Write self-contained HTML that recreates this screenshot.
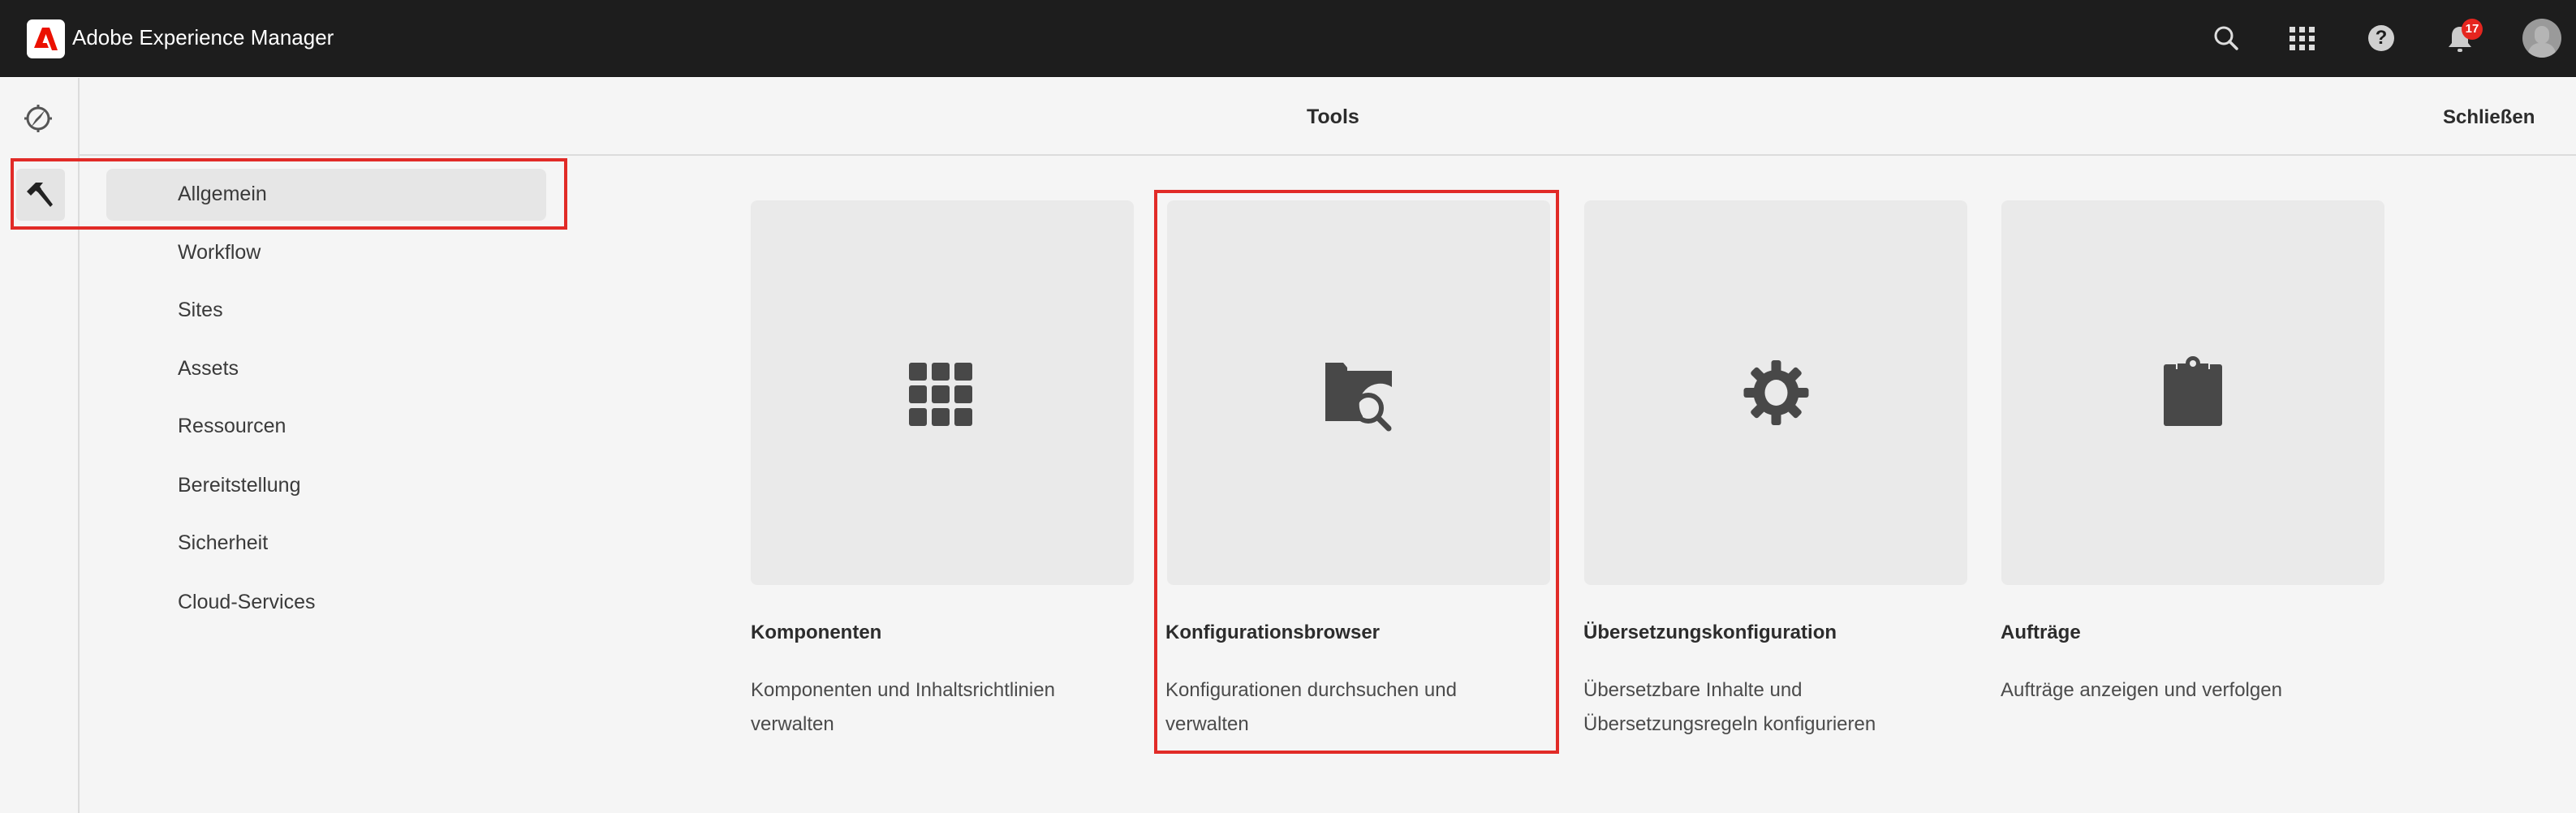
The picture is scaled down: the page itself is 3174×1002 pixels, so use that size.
<!DOCTYPE html>
<html><head><meta charset="utf-8"><style>
*{margin:0;padding:0;box-sizing:border-box}
body{width:3174px;height:1002px;background:#f5f5f5;font-family:"Liberation Sans",sans-serif;position:relative;overflow:hidden;color:#2c2c2c}
.a{position:absolute}
.hdr{left:0;top:0;width:3174px;height:95px;background:#1d1d1d}
.nav{left:219px;font-size:25px;color:#3a3a3a}
.card{top:247px;width:472px;height:474px;background:#eaeaea;border-radius:8px}
.t{font-size:24px;font-weight:bold;color:#2c2c2c;top:766px}
.d{font-size:24px;color:#4b4b4b;line-height:42px;top:830px}
</style></head><body>
<div class="a hdr"></div>
<div class="a" style="left:33px;top:24px;width:47px;height:48px;background:#fff;border-radius:7px"></div>
<svg class="a" style="left:33px;top:24px" width="47" height="48" viewBox="0 0 47 48"><path d="M19 10h9l10 28h-7l-7.5-20-4 11h5l2.5 6H9z" fill="#eb1000"/></svg>
<div class="a" style="left:89px;top:31px;font-size:26px;color:#fff">Adobe Experience Manager</div>
<svg class="a" style="left:2725px;top:29px" width="36" height="36" viewBox="0 0 36 36"><circle cx="15" cy="15" r="10" fill="none" stroke="#ddd" stroke-width="3"/><path d="M22 22l9 9" stroke="#ddd" stroke-width="3.5" stroke-linecap="round"/></svg>
<svg class="a" style="left:2821px;top:33px" width="32" height="30" viewBox="0 0 32 30"><g fill="#ddd"><rect x="0" y="0" width="7" height="7"/><rect x="12" y="0" width="7" height="7"/><rect x="24" y="0" width="7" height="7"/><rect x="0" y="11" width="7" height="7"/><rect x="12" y="11" width="7" height="7"/><rect x="24" y="11" width="7" height="7"/><rect x="0" y="22" width="7" height="7"/><rect x="12" y="22" width="7" height="7"/><rect x="24" y="22" width="7" height="7"/></g></svg>
<div class="a" style="left:2918px;top:31px;width:32px;height:32px;border-radius:50%;background:#d0d0d0;color:#1d1d1d;font-weight:bold;font-size:24px;text-align:center;line-height:32px">?</div>
<svg class="a" style="left:3014px;top:30px" width="34" height="40" viewBox="0 0 34 40"><path d="M17 3c-6 0-10 4-10 11v9l-4 5h28l-4-5v-9c0-7-4-11-10-11z" fill="#ccc"/><rect x="14" y="30" width="6" height="4" rx="2" fill="#ccc"/></svg>
<div class="a" style="left:3033px;top:23px;width:26px;height:26px;border-radius:50%;background:#e5261f;color:#fff;font-size:15px;font-weight:bold;text-align:center;line-height:26px">17</div>
<div class="a" style="left:3108px;top:23px;width:48px;height:48px;border-radius:50%;background:#9a9a9a;overflow:hidden"><div class="a" style="left:15px;top:9px;width:18px;height:22px;border-radius:9px;background:#b5b5b5"></div><div class="a" style="left:7px;top:30px;width:34px;height:30px;border-radius:14px;background:#b5b5b5"></div></div>
<div class="a" style="left:96px;top:95px;width:2px;height:907px;background:#dcdcdc"></div>
<div class="a" style="left:98px;top:190px;width:3076px;height:2px;background:#dcdcdc"></div>
<div class="a" style="left:0;top:95px;width:3174px;height:1px;background:#fff"></div>
<svg class="a" style="left:28px;top:127px" width="38" height="38" viewBox="0 0 38 38"><circle cx="19" cy="19" r="13" fill="none" stroke="#555" stroke-width="3"/><path d="M19 2v5M19 31v5M2 19h5M31 19h5" stroke="#555" stroke-width="3"/><path d="M28 8L16 20l-6 10 12-12z" fill="#555"/></svg>
<div class="a" style="left:1610px;top:130px;font-size:25px;font-weight:bold">Tools</div>
<div class="a" style="left:3010px;top:131px;font-size:24px;font-weight:bold">Schließen</div>
<div class="a" style="left:20px;top:208px;width:60px;height:64px;background:#e4e4e4;border-radius:6px"></div>
<svg class="a" style="left:30px;top:222px" width="38" height="38" viewBox="0 0 38 38"><path d="M14 3h9l-4 5 2 3-4 4-3-2-6 6-5-5z" fill="#222"/><path d="M16 14l4-4 15 20-3 3z" fill="#222"/></svg>
<div class="a" style="left:131px;top:208px;width:542px;height:64px;background:#e6e6e6;border-radius:8px"></div>
<div class="a" style="left:13px;top:195px;width:686px;height:88px;border:4px solid #e12b27"></div>
<div class="a nav" style="top:225px">Allgemein</div>
<div class="a nav" style="top:297px">Workflow</div>
<div class="a nav" style="top:368px">Sites</div>
<div class="a nav" style="top:440px">Assets</div>
<div class="a nav" style="top:511px">Ressourcen</div>
<div class="a nav" style="top:584px">Bereitstellung</div>
<div class="a nav" style="top:655px">Sicherheit</div>
<div class="a nav" style="top:728px">Cloud-Services</div>
<div class="a card" style="left:925px"></div>
<div class="a card" style="left:1438px"></div>
<div class="a card" style="left:1952px"></div>
<div class="a card" style="left:2466px"></div>
<svg class="a" style="left:1120px;top:447px" width="78" height="78" viewBox="0 0 78 78"><g fill="#484848"><rect x="0" y="0" width="22" height="22" rx="3"/><rect x="28" y="0" width="22" height="22" rx="3"/><rect x="56" y="0" width="22" height="22" rx="3"/><rect x="0" y="28" width="22" height="22" rx="3"/><rect x="28" y="28" width="22" height="22" rx="3"/><rect x="56" y="28" width="22" height="22" rx="3"/><rect x="0" y="56" width="22" height="22" rx="3"/><rect x="28" y="56" width="22" height="22" rx="3"/><rect x="56" y="56" width="22" height="22" rx="3"/></g></svg>
<svg class="a" style="left:1633px;top:443px" width="92" height="92" viewBox="0 0 92 92"><path d="M0 4h22l5 6v4h55v20a26 26 0 0 0-36 36v6H0z" fill="#484848"/><circle cx="53" cy="60" r="16" fill="none" stroke="#484848" stroke-width="6"/><path d="M65 72l13 13" stroke="#484848" stroke-width="7" stroke-linecap="round"/></svg>
<svg class="a" style="left:2148px;top:443px" width="81" height="82" viewBox="-40 -41 80 82"><g fill="#484848"><rect x="-6" y="-40" width="12" height="80" rx="3"/><rect x="-6" y="-40" width="12" height="80" rx="3" transform="rotate(45)"/><rect x="-6" y="-40" width="12" height="80" rx="3" transform="rotate(90)"/><rect x="-6" y="-40" width="12" height="80" rx="3" transform="rotate(135)"/><circle r="28"/></g><ellipse rx="14" ry="16" fill="#eaeaea"/></svg>
<svg class="a" style="left:2666px;top:435px" width="72" height="90" viewBox="0 0 72 90"><path d="M3 14h12v6h42v-6h12a3 3 0 0 1 3 3v70a3 3 0 0 1-3 3H3a3 3 0 0 1-3-3V17a3 3 0 0 1 3-3z" fill="#484848"/><path d="M17 13h10a9 9 0 0 1 18 0h10v10H17z" fill="#484848"/><circle cx="36" cy="13" r="4" fill="#eaeaea"/></svg>
<div class="a t" style="left:925px">Komponenten</div>
<div class="a d" style="left:925px">Komponenten und Inhaltsrichtlinien<br>verwalten</div>
<div class="a t" style="left:1436px">Konfigurationsbrowser</div>
<div class="a d" style="left:1436px">Konfigurationen durchsuchen und<br>verwalten</div>
<div class="a t" style="left:1951px">Übersetzungskonfiguration</div>
<div class="a d" style="left:1951px">Übersetzbare Inhalte und<br>Übersetzungsregeln konfigurieren</div>
<div class="a t" style="left:2465px">Aufträge</div>
<div class="a d" style="left:2465px">Aufträge anzeigen und verfolgen</div>
<div class="a" style="left:1422px;top:234px;width:499px;height:695px;border:4px solid #e12b27"></div>
</body></html>
